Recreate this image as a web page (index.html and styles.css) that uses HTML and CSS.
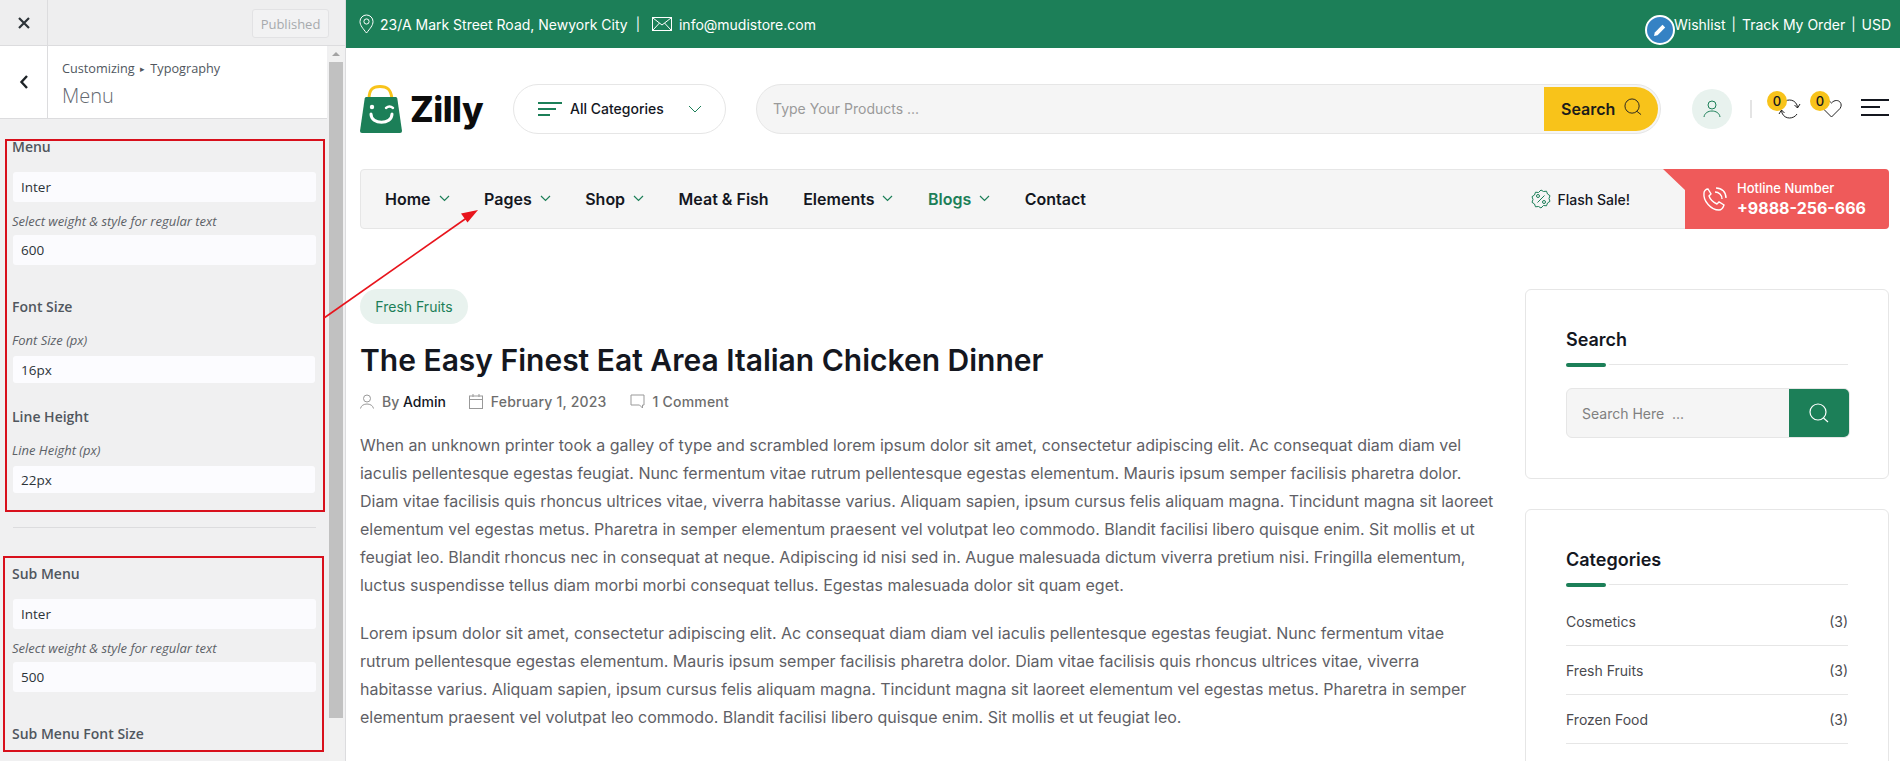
FILE: index.html
```html
<!DOCTYPE html>
<html>
<head>
    <title>Zilly - Customizing Typography</title>
    <link rel="stylesheet" href="styles.css">
</head>
<body>
    <aside class="customizer">
        <div class="cz-top">
            <div class="cz-close">
                <svg width="14" height="14" viewBox="0 0 14 14"><path d="M2 2l10 10M12 2L2 12" stroke="#2c3338" stroke-width="2.2" fill="none"/></svg>
            </div>
            <button class="cz-publish">Published</button>
        </div>
        <div class="cz-body">
            <div class="cz-panel">
                <div class="cz-title">
                    <div class="cz-back">
                        <svg width="10" height="16" viewBox="0 0 10 16"><path d="M8 2L2.5 8 8 14" stroke="#1d2327" stroke-width="2.4" fill="none"/></svg>
                    </div>
                    <div class="cz-heading">
                        <div class="cz-crumb">Customizing <span class="cz-arrow">▸</span> Typography</div>
                        <div class="cz-name">Menu</div>
                    </div>
                </div>
                <div class="cz-controls">
                    <div class="ctl-title ctl-first">Menu</div>
                    <div class="ctl-box ctl-tall">Inter</div>
                    <div class="ctl-hint">Select weight &amp; style for regular text</div>
                    <div class="ctl-box ctl-tall">600</div>
                    <div class="ctl-title ctl-gap">Font Size</div>
                    <div class="ctl-hint ctl-hint-top">Font Size (px)</div>
                    <div class="ctl-box ctl-short">16px</div>
                    <div class="ctl-title ctl-gap-small">Line Height</div>
                    <div class="ctl-hint ctl-hint-top">Line Height (px)</div>
                    <div class="ctl-box ctl-short">22px</div>
                    <hr class="ctl-line">
                    <div class="ctl-title">Sub Menu</div>
                    <div class="ctl-box ctl-tall">Inter</div>
                    <div class="ctl-hint">Select weight &amp; style for regular text</div>
                    <div class="ctl-box ctl-tall">500</div>
                    <div class="ctl-title ctl-gap-last">Sub Menu Font Size</div>
                </div>
            </div>
            <div class="cz-scroll">
                <div class="cz-scroll-up"></div>
                <div class="cz-scroll-thumb"></div>
            </div>
        </div>
    </aside>

    <div class="site">
        <div class="topbar">
            <div class="topbar-left">
                <svg width="15" height="20" viewBox="0 0 15 20" fill="none" stroke="#fff" stroke-width="1"><path d="M7.5 19C4 14.5 1 11.5 1 7.5a6.500 6.500 0 0 1 13 0C14 11.500 11 14.500 7.500 19z"/><circle cx="7.500" cy="7.500" r="2.600"/></svg>
                <span>23/A Mark Street Road, Newyork City</span>
                <span class="topbar-sep">|</span>
                <svg class="topbar-mail" width="20" height="14" viewBox="0 0 20 14" fill="none" stroke="#fff" stroke-width="1"><rect x="0.500" y="0.500" width="19" height="13"/><path d="M1 1l9 7 9-7M1 13l6.500-7M19 13l-6.500-7"/></svg>
                <span>info@mudistore.com</span>
            </div>
            <div class="topbar-right">
                <span>Wishlist</span>
                <span class="topbar-sep">|</span>
                <span>Track My Order</span>
                <span class="topbar-sep">|</span>
                <span>USD</span>
            </div>
        </div>

        <header class="header">
            <div class="logo">
                <svg width="42" height="48" viewBox="0 0 42 48">
                    <path d="M9 14C9 4 13 1.500 20 1.500S31 4 32 14" fill="none" stroke="#f8c31a" stroke-width="3"/>
                    <path d="M6 12h30q1 0 1.300 1.500L42 46q0 2-2 2H2q-2 0-2-2L4.700 13.500Q5 12 6 12z" fill="#1c7f58"/>
                    <circle cx="12" cy="22" r="2.200" fill="#fff"/>
                    <path d="M26 23q3.500-3 7 0" stroke="#fff" stroke-width="2.400" fill="none" stroke-linecap="round"/>
                    <path d="M11 29c0 11 21 11 21 0" stroke="#fff" stroke-width="3" fill="none" stroke-linecap="round"/>
                </svg>
                <span class="logo-text">Zilly</span>
            </div>
            <div class="cat-pill">
                <svg width="24" height="14" viewBox="0 0 24 14"><path d="M0 1h24M0 7h18M0 13h12" stroke="#1c7f58" stroke-width="2"/></svg>
                <span>All Categories</span>
                <svg class="cat-chevron" width="14" height="8" viewBox="0 0 14 8"><path d="M1 1l6 6 6-6" stroke="#1c7f58" stroke-width="1" fill="none"/></svg>
            </div>
            <div class="search-box">
                <span class="search-hint">Type Your Products ...</span>
                <button class="search-btn">
                    Search
                    <svg width="18" height="18" viewBox="0 0 19 19" fill="none" stroke="#222" stroke-width="1"><circle cx="8.500" cy="8.500" r="7.500"/><path d="M13.500 14l4.500 3.500"/></svg>
                </button>
            </div>
            <div class="user-circle">
                <svg width="18" height="18" viewBox="0 0 18 18" fill="none" stroke="#1c7f58" stroke-width="1"><circle cx="9" cy="5" r="4"/><path d="M1 17c1-8 15-8 16 0"/></svg>
            </div>
            <div class="header-sep"></div>
            <div class="icon-badge">
                <span class="badge">0</span>
                <svg width="23" height="20" viewBox="0 0 23 20" fill="none" stroke="#222" stroke-width="1"><path d="M4 5C7 0 16-1 19 6l.5 3M22 5l-2.500 4-3-3M19 15c-3 5-12 6-15-1l-.5-3M1 15l2.500-4 3 3"/></svg>
            </div>
            <div class="icon-badge icon-heart">
                <span class="badge">0</span>
                <svg width="21" height="19" viewBox="0 0 21 19" fill="none" stroke="#222" stroke-width="1"><path d="M10.500 18L2 9.500C-2 4 5-2 10.500 4 16-2 23 4 19 9.500z"/></svg>
            </div>
            <div class="burger">
                <span></span><span class="burger-short"></span><span></span>
            </div>
        </header>

        <nav class="nav">
            <a class="nav-item">Home <svg class="nav-chev" width="11" height="7" viewBox="0 0 11 7"><path d="M1 1l4.500 4.500L10 1" stroke="#1c7f58" stroke-width="1.200" fill="none"/></svg></a>
            <a class="nav-item">Pages <svg class="nav-chev" width="11" height="7" viewBox="0 0 11 7"><path d="M1 1l4.500 4.500L10 1" stroke="#1c7f58" stroke-width="1.200" fill="none"/></svg></a>
            <a class="nav-item">Shop <svg class="nav-chev" width="11" height="7" viewBox="0 0 11 7"><path d="M1 1l4.500 4.500L10 1" stroke="#1c7f58" stroke-width="1.200" fill="none"/></svg></a>
            <a class="nav-item">Meat &amp; Fish</a>
            <a class="nav-item">Elements <svg class="nav-chev" width="11" height="7" viewBox="0 0 11 7"><path d="M1 1l4.500 4.500L10 1" stroke="#1c7f58" stroke-width="1.200" fill="none"/></svg></a>
            <a class="nav-item nav-active">Blogs <svg class="nav-chev" width="11" height="7" viewBox="0 0 11 7"><path d="M1 1l4.500 4.500L10 1" stroke="#1c7f58" stroke-width="1.200" fill="none"/></svg></a>
            <a class="nav-item">Contact</a>
            <div class="flash">
                <svg width="20" height="20" viewBox="0 0 20 20" fill="none" stroke="#1c7f58" stroke-width="1"><path d="M10 1l2.500 1.500 3-.3 1 2.800 2.500 1.700-1 2.800 1 2.800-2.500 1.700-1 2.800-3-.3L10 19l-2.500-1.500-3 .3-1-2.800L1 13.300l1-2.800-1-2.800L3.500 6l1-2.800 3 .3z"/><path d="M6.500 13.500l7-7"/><circle cx="7" cy="7" r="1.500"/><circle cx="13" cy="13" r="1.500"/></svg>
                <span>Flash Sale!</span>
            </div>
            <div class="hotline">
                <svg width="25" height="25" viewBox="0 0 25 25" fill="none" stroke="#fff" stroke-width="1.400"><path d="M6 2l3 5-2 2c1 3 4 6 8 8l2-2 5 3c-1 3-3 5-5 5C9 23 1 14 2 6c0-2 2-4 4-4z"/><path d="M13 5c4 0 7 3 7 7M14 1c6 0 10 4 10 10"/></svg>
                <div class="hotline-text">
                    <div class="hotline-label">Hotline Number</div>
                    <div class="hotline-num">+9888-256-666</div>
                </div>
            </div>
        </nav>

        <div class="content">
            <main class="post">
                <span class="post-tag">Fresh Fruits</span>
                <h1 class="post-title">The Easy Finest Eat Area Italian Chicken Dinner</h1>
                <div class="post-meta">
                    <svg width="14" height="15" viewBox="0 0 14 15" fill="none" stroke="#999" stroke-width="1"><circle cx="7" cy="4.500" r="3.500"/><path d="M.5 14.500c1-6 12-6 13 0"/></svg>
                    <span class="meta-text">By <b class="meta-author">Admin</b></span>
                    <svg class="meta-icon" width="14" height="15" viewBox="0 0 14 15" fill="none" stroke="#999" stroke-width="1"><rect x=".5" y="2" width="13" height="12.500"/><path d="M.5 5.500h13M4 0v3M10 0v3"/></svg>
                    <span class="meta-text meta-wide">February 1, 2023</span>
                    <svg class="meta-icon" width="15" height="15" viewBox="0 0 15 15" fill="none" stroke="#999" stroke-width="1"><path d="M1 1h13v10h-1.500v3l-3-3H1z"/></svg>
                    <span class="meta-text meta-wide">1 Comment</span>
                </div>
                <p class="post-text">When an unknown printer took a galley of type and scrambled lorem ipsum dolor sit amet, consectetur adipiscing elit. Ac consequat diam diam vel iaculis pellentesque egestas feugiat. Nunc fermentum vitae rutrum pellentesque egestas elementum. Mauris ipsum semper facilisis pharetra dolor. Diam vitae facilisis quis rhoncus ultrices vitae, viverra habitasse varius. Aliquam sapien, ipsum cursus felis aliquam magna. Tincidunt magna sit laoreet elementum vel egestas metus. Pharetra in semper elementum praesent vel volutpat leo commodo. Blandit facilisi libero quisque enim. Sit mollis et ut feugiat leo. Blandit rhoncus nec in consequat at neque. Adipiscing id nisi sed in. Augue malesuada dictum viverra pretium nisi. Fringilla elementum, luctus suspendisse tellus diam morbi morbi consequat tellus. Egestas malesuada dolor sit quam eget.</p>
                <p class="post-text">Lorem ipsum dolor sit amet, consectetur adipiscing elit. Ac consequat diam diam vel iaculis pellentesque egestas feugiat. Nunc fermentum vitae rutrum pellentesque egestas elementum. Mauris ipsum semper facilisis pharetra dolor. Diam vitae facilisis quis rhoncus ultrices vitae, viverra habitasse varius. Aliquam sapien, ipsum cursus felis aliquam magna. Tincidunt magna sit laoreet elementum vel egestas metus. Pharetra in semper elementum praesent vel volutpat leo commodo. Blandit facilisi libero quisque enim. Sit mollis et ut feugiat leo.</p>
            </main>
            <div class="widgets">
                <section class="widget">
                    <h3 class="widget-title">Search</h3>
                    <div class="widget-rule"><span></span></div>
                    <div class="widget-search">
                        <span class="widget-hint">Search Here &nbsp;...</span>
                        <div class="widget-btn">
                            <svg width="20" height="20" viewBox="0 0 20 20" fill="none" stroke="#fff" stroke-width="1.200"><circle cx="9" cy="9" r="8"/><path d="M14.500 15l4.500 4"/></svg>
                        </div>
                    </div>
                </section>
                <section class="widget">
                    <h3 class="widget-title">Categories</h3>
                    <div class="widget-rule"><span></span></div>
                    <ul class="cat-list">
                        <li><span>Cosmetics</span><span>(3)</span></li>
                        <li><span>Fresh Fruits</span><span>(3)</span></li>
                        <li><span>Frozen Food</span><span>(3)</span></li>
                    </ul>
                </section>
            </div>
        </div>
    </div>

    <!-- red annotations drawn over the screenshot -->
    <div class="mark mark-menu"></div>
    <div class="mark mark-sub"></div>
    <svg class="mark-arrow" width="1900" height="761" viewBox="0 0 1900 761">
        <path d="M324 318L468 217" stroke="#e8141c" stroke-width="1.600" fill="none"/>
        <path d="M478 210l-17 3.500 6.500 9z" fill="#e8141c"/>
    </svg>
    <div class="edit-dot">
        <svg width="14" height="14" viewBox="0 0 14 14"><path d="M1 13l.8-3.500L9.500 1.800l2.700 2.700L4.500 12.200z" fill="#fff"/></svg>
    </div>
</body>
</html>
```

FILE: styles.css
```css
* {
    box-sizing: border-box;
}
html, body {
    height: 100%;
}
body {
    margin: 0;
    display: flex;
    overflow: hidden;
    background: #fff;
    font-family: Inter, sans-serif;
    color: #14171f;
}

/* customizer sidebar */
.customizer {
    width: 346px;
    height: 761px;
    flex-shrink: 0;
    display: flex;
    flex-direction: column;
    background: #f0f0f1;
    border-right: 1px solid #dcdcde;
    font-family: "Open Sans", sans-serif;
    color: #50575e;
    overflow: hidden;
}
.cz-top {
    height: 46px;
    flex-shrink: 0;
    display: flex;
    align-items: center;
    justify-content: space-between;
    padding-right: 16px;
    background: #eeeeef;
    border-bottom: 1px solid #dcdcde;
}
.cz-close {
    width: 48px;
    height: 45px;
    display: flex;
    align-items: center;
    justify-content: center;
    border-right: 1px solid #dcdcde;
}
.cz-publish {
    width: 77px;
    height: 29px;
    margin-top: 2px;
    padding: 0;
    background: #f2f2f3;
    border: 1px solid #e2e2e4;
    border-radius: 3px;
    color: #a7aaad;
    font: 13px "Open Sans", sans-serif;
}
.cz-body {
    flex: 1;
    display: flex;
    min-height: 0;
    padding-right: 2px;
}
.cz-panel {
    width: 328px;
    overflow: hidden;
}
.cz-title {
    height: 73px;
    display: flex;
    background: #fff;
    border-bottom: 1px solid #dcdcde;
}
.cz-back {
    width: 48px;
    display: flex;
    align-items: center;
    justify-content: center;
    border-right: 1px solid #dcdcde;
}
.cz-heading {
    padding: 12px 0 0 14px;
}
.cz-crumb {
    font-size: 12.700px;
    line-height: 20px;
}
.cz-arrow {
    font-size: 9px;
    margin: 0 2px;
    vertical-align: 1px;
}
.cz-name {
    margin-top: 3px;
    font-size: 20px;
    font-weight: 300;
    line-height: 28px;
    color: #646970;
}
.cz-controls {
    padding: 19px 11px 0 12px;
}
.ctl-title {
    font-size: 14px;
    font-weight: 600;
    line-height: 20px;
    margin-bottom: 15px;
}
.ctl-first {
    margin-top: -1px;
    margin-bottom: 15px;
}
.ctl-gap {
    margin-top: 32px;
}
.ctl-gap-small {
    margin-top: 24px;
}
.ctl-gap-last {
    margin-top: 32px;
}
.ctl-box {
    margin-left: 1px;
    display: flex;
    align-items: center;
    padding-left: 8px;
    background: #fbfbfe;
    border-radius: 3px;
    color: #2c3338;
    font-size: 13.500px;
}
.ctl-tall {
    height: 30px;
}
.ctl-short {
    height: 27px;
    margin-right: 1px;
    background: #fcfcff;
}
.ctl-hint {
    height: 33px;
    padding-top: 11px;
    font-size: 13px;
    line-height: 16px;
    font-style: italic;
    color: #5c6167;
}
.ctl-hint-top {
    margin-top: 2px;
    height: 24px;
    padding-top: 0;
}
.ctl-line {
    height: 1px;
    margin: 34px 0 36px 1px;
    border: 0;
    background: #dcdcde;
}
.cz-scroll {
    width: 14px;
    margin-left: 2px;
    background: #f1f1f1;
}
.cz-scroll-up {
    height: 16px;
    position: relative;
}
.cz-scroll-up::after {
    content: "";
    position: absolute;
    left: 3px;
    top: 6px;
    border: 4px solid transparent;
    border-top: 0;
    border-bottom: 4px solid #a3a3a3;
}
.cz-scroll-thumb {
    height: 656px;
    background: #c1c1c1;
}

/* site */
.site {
    flex: 1;
    min-width: 0;
}
.topbar {
    height: 48px;
    display: flex;
    align-items: center;
    justify-content: space-between;
    padding: 0 9px 0 13px;
    background: #1c7f58;
    color: #fff;
    font-size: 14px;
}
.topbar-left, .topbar-right {
    display: flex;
    align-items: center;
}
.topbar-left {
    gap: 8px;
}
.topbar-right {
    gap: 6px;
}
.topbar-left svg:first-child {
    margin-right: -2px;
}
.topbar-sep {
    font-size: 13px;
}
.topbar-left .topbar-sep {
    margin-right: 4px;
}
.topbar-mail {
    margin-right: -1px;
}
.header {
    height: 121px;
    display: flex;
    align-items: center;
    padding: 0 10px 0 14px;
}
.logo {
    display: flex;
    align-items: center;
    gap: 8px;
    width: 153px;
}
.logo-text {
    font-size: 35px;
    font-weight: 800;
    line-height: 48px;
    color: #0c0c0c;
    letter-spacing: -.5px;
}
.cat-pill {
    width: 213px;
    height: 50px;
    display: flex;
    align-items: center;
    gap: 8px;
    padding-left: 24px;
    border: 1px solid #e6e6e6;
    border-radius: 25px;
    font-size: 14px;
    font-weight: 500;
}
.cat-chevron {
    margin-left: 16px;
}
.search-box {
    width: 905px;
    height: 50px;
    margin-left: 30px;
    display: flex;
    align-items: center;
    justify-content: space-between;
    padding: 3px 2px 3px 16px;
    background: #f5f5f5;
    border: 1px solid #e6e6e6;
    border-radius: 25px;
}
.search-hint {
    font-size: 14px;
    color: #9a9a9a;
}
.search-btn {
    width: 114px;
    height: 44px;
    display: flex;
    align-items: center;
    gap: 9px;
    padding: 0 0 0 17px;
    background: #f8c31a;
    border: 0;
    border-radius: 0 22px 22px 0;
    color: #1b1b1b;
    font: 600 16px Inter, sans-serif;
}
.search-btn svg {
    margin-top: -4px;
}
.user-circle {
    width: 40px;
    height: 40px;
    margin-left: 31px;
    display: flex;
    align-items: center;
    justify-content: center;
    background: #e8f2ee;
    border-radius: 50%;
}
.header-sep {
    width: 2px;
    height: 18px;
    margin-left: 18px;
    background: #e4e4e4;
}
.icon-badge {
    position: relative;
    width: 23px;
    height: 20px;
    margin-left: 26px;
}
.icon-heart {
    width: 21px;
    margin-left: 20px;
}
.badge {
    position: absolute;
    left: -11px;
    top: -8px;
    width: 20px;
    height: 20px;
    display: flex;
    align-items: center;
    justify-content: center;
    background: #f8c31a;
    border-radius: 50%;
    font-size: 13px;
    font-weight: 500;
}
.burger {
    width: 28px;
    height: 17px;
    margin-left: 19px;
    margin-bottom: 3px;
    display: flex;
    flex-direction: column;
    justify-content: space-between;
}
.burger span {
    height: 2px;
    background: #14171f;
}
.burger .burger-short {
    width: 19px;
}
.nav {
    height: 60px;
    margin: 0 11px 0 14px;
    display: flex;
    align-items: center;
    padding-left: 24px;
    background: #f5f5f5;
    border: 1px solid #e6e6e6;
    border-radius: 4px;
}
.nav-item {
    display: flex;
    align-items: center;
    gap: 8px;
    margin-right: 34.500px;
    font-size: 16px;
    font-weight: 600;
    line-height: 22px;
    color: #14171f;
}
.nav-active {
    color: #1c7f58;
}
.nav-chev {
    margin-top: -2px;
}
.flash {
    display: flex;
    align-items: center;
    gap: 7px;
    margin-left: auto;
    margin-right: 33px;
    font-size: 14px;
    font-weight: 500;
}
.hotline {
    width: 226px;
    height: 60px;
    margin: -1px -1px -1px 0;
    display: flex;
    align-items: center;
    gap: 10px;
    padding-left: 39px;
    background: #ef5a5a;
    border-radius: 0 4px 4px 0;
    clip-path: polygon(0 0, 100% 0, 100% 100%, 22px 100%, 22px 21px);
    color: #fff;
}
.hotline-label {
    font-size: 13px;
    font-weight: 500;
    line-height: 17px;
}
.hotline-num {
    font-size: 16px;
    font-weight: 700;
    line-height: 22px;
}
.content {
    display: flex;
    padding: 60px 11px 0 14px;
}
.post {
    width: 1165px;
    flex-shrink: 0;
}
.post-tag {
    display: inline-block;
    width: 108px;
    height: 35px;
    background: #e8f2ee;
    border-radius: 18px;
    color: #1c7f58;
    font-size: 14px;
    line-height: 35px;
    text-align: center;
}
.post-title {
    margin: 14px 0 0;
    font-size: 30px;
    font-weight: 600;
    line-height: 44px;
    color: #14171f;
}
.post-meta {
    display: flex;
    align-items: center;
    height: 20px;
    margin-top: 9px;
    font-size: 14px;
    font-weight: 500;
    color: #6d6d6d;
}
.meta-text {
    margin-left: 8px;
}
.meta-wide {
    letter-spacing: .2px;
}
.meta-author {
    font-weight: 500;
    color: #14171f;
}
.meta-icon {
    margin-left: 23px;
}
.post-text {
    margin: 20px 0 0;
    width: 1135px;
    font-size: 16px;
    line-height: 28px;
    letter-spacing: -.02px;
    color: #5f5f66;
}
.widgets {
    flex: 1;
    display: flex;
    flex-direction: column;
    gap: 30px;
}
.widget {
    padding: 36px 40px 40px;
    background: #fff;
    border: 1px solid #e6e6e6;
    border-radius: 6px;
}
.widget-title {
    margin: 0;
    font-size: 18px;
    font-weight: 600;
    line-height: 28px;
}
.widget-rule {
    height: 1px;
    margin-top: 10px;
    margin-bottom: 23px;
    background: #e6e6e6;
    position: relative;
}
.widget-rule span {
    position: absolute;
    left: 0;
    top: -1px;
    width: 40px;
    height: 4px;
    background: #1c7f58;
    border-radius: 2px;
    box-shadow: 3px 0 0 #fff;
}
.widget-search {
    height: 50px;
    margin-right: -2px;
    display: flex;
    align-items: center;
    justify-content: space-between;
    padding-left: 15px;
    background: #f5f5f5;
    border: 1px solid #e6e6e6;
    border-radius: 6px;
    overflow: hidden;
    font-size: 14px;
    color: #808080;
}
.widget-btn {
    width: 60px;
    height: 50px;
    display: flex;
    align-items: center;
    justify-content: center;
    background: #1c7f58;
}
.cat-list {
    margin: -11px 0 0;
    padding: 0;
    list-style: none;
    font-size: 14px;
    color: #4a4a4f;
}
.cat-list li {
    height: 49px;
    display: flex;
    align-items: center;
    justify-content: space-between;
    border-bottom: 1px solid #e6e6e6;
}

/* annotations over the page */
.mark {
    position: absolute;
    border: 2px solid #d8101c;
    pointer-events: none;
}
.mark-menu {
    left: 5px;
    top: 139px;
    width: 320px;
    height: 373px;
}
.mark-sub {
    left: 3px;
    top: 556px;
    width: 321px;
    height: 196px;
}
.mark-arrow {
    position: absolute;
    left: 0;
    top: 0;
    pointer-events: none;
}
.edit-dot {
    position: absolute;
    left: 1645px;
    top: 15px;
    width: 30px;
    height: 30px;
    display: flex;
    align-items: center;
    justify-content: center;
    background: #3582c4;
    border: 2px solid #fff;
    border-radius: 50%;
}
```
